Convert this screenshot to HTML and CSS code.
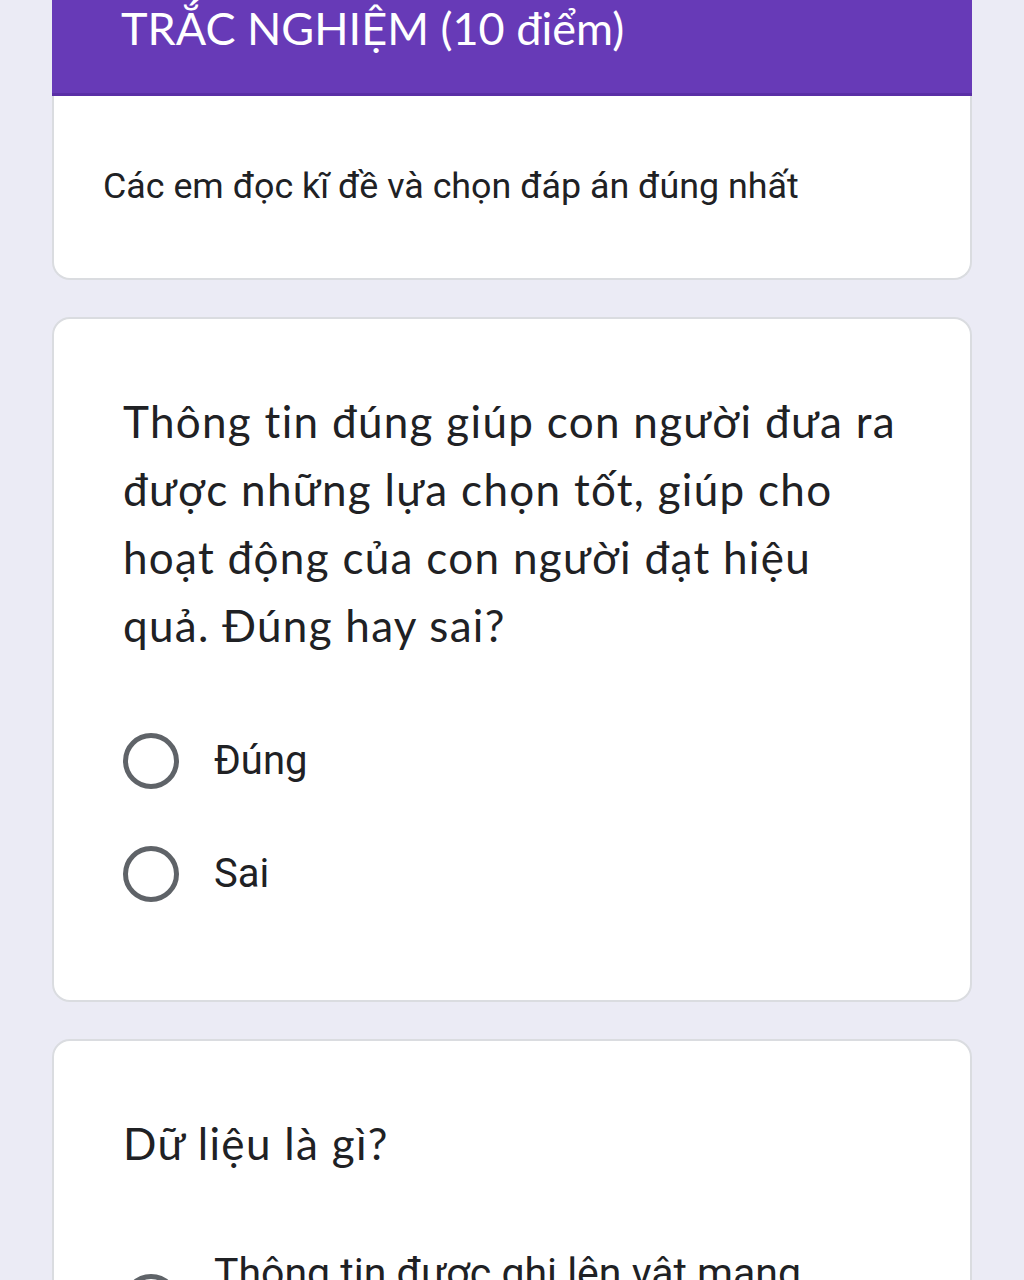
FILE: index.html
```html
<!DOCTYPE html>
<html lang="vi">
<head>
<meta charset="utf-8">
<title>Trắc nghiệm</title>
<link rel="stylesheet" href="styles.css">
</head>
<body>
<main class="form">
  <section class="card header-card">
    <div class="header-band">
      <h1 class="form-title">TRẮC NGHIỆM (10 điểm)</h1>
    </div>
    <div class="header-body">
      <p class="form-desc">Các em đọc kĩ đề và chọn đáp án đúng nhất</p>
    </div>
  </section>

  <section class="card question">
    <h2 class="q-title">Thông tin đúng giúp con người đưa ra được những lựa chọn tốt, giúp cho hoạt động của con người đạt hiệu quả. Đúng hay sai?</h2>
    <div class="options">
      <label class="option"><span class="radio"></span><span class="opt-text">Đúng</span></label>
      <label class="option"><span class="radio"></span><span class="opt-text">Sai</span></label>
    </div>
  </section>

  <section class="card question">
    <h2 class="q-title">Dữ liệu là gì?</h2>
    <div class="options options-long">
      <label class="option"><span class="radio"></span><span class="opt-text">Thông tin được ghi lên vật mang tin</span></label>
    </div>
  </section>
</main>
</body>
</html>
```

FILE: styles.css
```css
html, body {
  margin: 0;
  padding: 0;
}
body {
  background: #ebebf5;
  font-family: "Roboto", "Liberation Sans", sans-serif;
  color: #202124;
}
.form {
  width: 920px;
  margin-left: 52px;
  display: flex;
  flex-direction: column;
  gap: 37px;
}
.card {
  background: #fff;
  border: 2px solid #dadce0;
  border-radius: 18px;
  box-sizing: border-box;
}
.header-card {
  border: none;
  border-radius: 0 0 18px 18px;
  background: transparent;
}
.header-band {
  background: #673ab7;
  height: 93px;
  border-bottom: 3px solid #5a2fa6;
  padding-left: 69px;
  box-sizing: content-box;
}
.form-title {
  margin: 0;
  font-family: "Lato", "Open Sans", sans-serif;
  font-weight: 400;
  font-size: 45px;
  line-height: 56px;
  color: #fff;
}
.header-body {
  background: #fff;
  border: 2px solid #dadce0;
  border-top: none;
  border-radius: 0 0 18px 18px;
  height: 184px;
  box-sizing: border-box;
  display: flex;
  align-items: center;
  padding: 0 49px 0 49px;
}
.form-desc {
  margin: 0;
  font-size: 35.8px;
  line-height: 42px;
  color: #202124;
  padding-bottom: 2px;
}
.question {
  padding: 68px 60px 70px 69px;
}
.q-title {
  margin: 0;
  font-family: "Lato", "Open Sans", sans-serif;
  font-weight: 400;
  font-size: 44px;
  letter-spacing: 1.3px;
  line-height: 68px;
  color: #202124;
}
.options {
  margin-top: 45px;
  display: flex;
  flex-direction: column;
}
.option {
  display: flex;
  align-items: center;
  gap: 35px;
  min-height: 113px;
}
.radio {
  width: 56px;
  height: 56px;
  border: 5px solid #5f6368;
  border-radius: 50%;
  box-sizing: border-box;
  flex: none;
}
.opt-text {
  font-size: 40px;
  line-height: 56px;
  color: #202124;
}
.options-long {
  margin-top: 67px;
}
.options-long .opt-text {
  font-size: 41px;
  line-height: 58px;
  max-width: 600px;
}
```
